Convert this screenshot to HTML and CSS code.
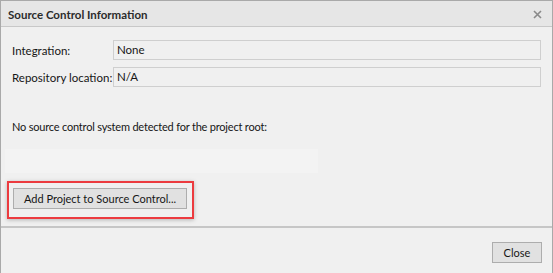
FILE: index.html
```html
<!DOCTYPE html>
<html lang="en">
<head>
    <meta charset="UTF-8">
    <title>Source Control Information</title>
    <link rel="stylesheet" href="styles.css">
</head>
<body>
    <div class="dialog">
        <div class="titlebar">
            <span class="title">Source Control Information</span>
            <span class="close-x">
                <svg width="9" height="9" viewBox="0 0 9 9"><path d="M1 1L8 8M8 1L1 8" stroke="#8a8a8a" stroke-width="1.6"/></svg>
            </span>
        </div>

        <div class="content">
            <div class="info-grid">
                <label>Integration:</label>
                <div class="field">None</div>
                <label>Repository location:</label>
                <div class="field">N/A</div>
            </div>

            <p class="message">No source control system detected for the project root:</p>

            <div class="path-panel"></div>

            <div class="highlight">
                <button class="btn">Add Project to Source Control...</button>
            </div>
        </div>

        <div class="footer">
            <button class="btn btn-close">Close</button>
        </div>
    </div>
</body>
</html>
```

FILE: styles.css
```css
body {
    margin: 0;
    padding: 0;
    background: #f0f0f0;
    font-family: Lato, "Noto Sans", Arial, sans-serif;
    font-size: 11px;
    color: #161616;
}
.dialog {
    width: 553px;
    height: 273px;
    box-sizing: border-box;
    border: 1px solid #a9a9a9;
    border-bottom: none;
    background: #f0f0f0;
    display: flex;
    flex-direction: column;
}
.titlebar {
    height: 24px;
    background: #e6e6e6;
    border-bottom: 1px solid #c8c8c8;
    display: flex;
    align-items: center;
    justify-content: space-between;
    padding: 1px 10px 0 7px;
}
.title {
    font-size: 11.5px;
    font-weight: 700;
    color: #2b2b2b;
}
.close-x {
    display: flex;
}
.content {
    height: 201px;
    box-sizing: border-box;
    padding: 13px 0 0 0;
    border-bottom: 2px solid #c6c6c6;
}
.info-grid {
    display: grid;
    grid-template-columns: 101px 1fr;
    grid-auto-rows: 20px;
    row-gap: 7px;
    padding: 0 11px 0 11px;
    align-items: center;
}
.info-grid label {
    white-space: nowrap;
    font-size: 11.5px;
}
.field {
    height: 20px;
    box-sizing: border-box;
    border: 1px solid #cfcfcf;
    padding: 0 3px;
    line-height: 18px;
    font-size: 11.5px;
}
.message {
    margin: 32px 0 0 11px;
    line-height: 16px;
    letter-spacing: -0.2px;
}
.path-panel {
    margin: 14px 0 0 4px;
    width: 313px;
    height: 24px;
    background: #f3f3f3;
}
.highlight {
    margin: 8px 0 0 6px;
    width: 187px;
    height: 38px;
    box-sizing: border-box;
    border: 2px solid #ec3b3f;
    padding: 5px 5px 0 4px;
    box-shadow: 0 1px 4px rgba(0,0,0,0.25);
}
.btn {
    font-family: inherit;
    font-size: 11px;
    color: #161616;
    background: #e1e1e1;
    border: 1px solid #adadad;
    height: 21px;
    padding: 0;
    width: 100%;
    cursor: pointer;
}
.footer {
    flex: 1;
    display: flex;
    justify-content: flex-end;
    align-items: flex-start;
    padding: 14px 10px 0 0;
}
.btn-close {
    width: 50px;
}
```
